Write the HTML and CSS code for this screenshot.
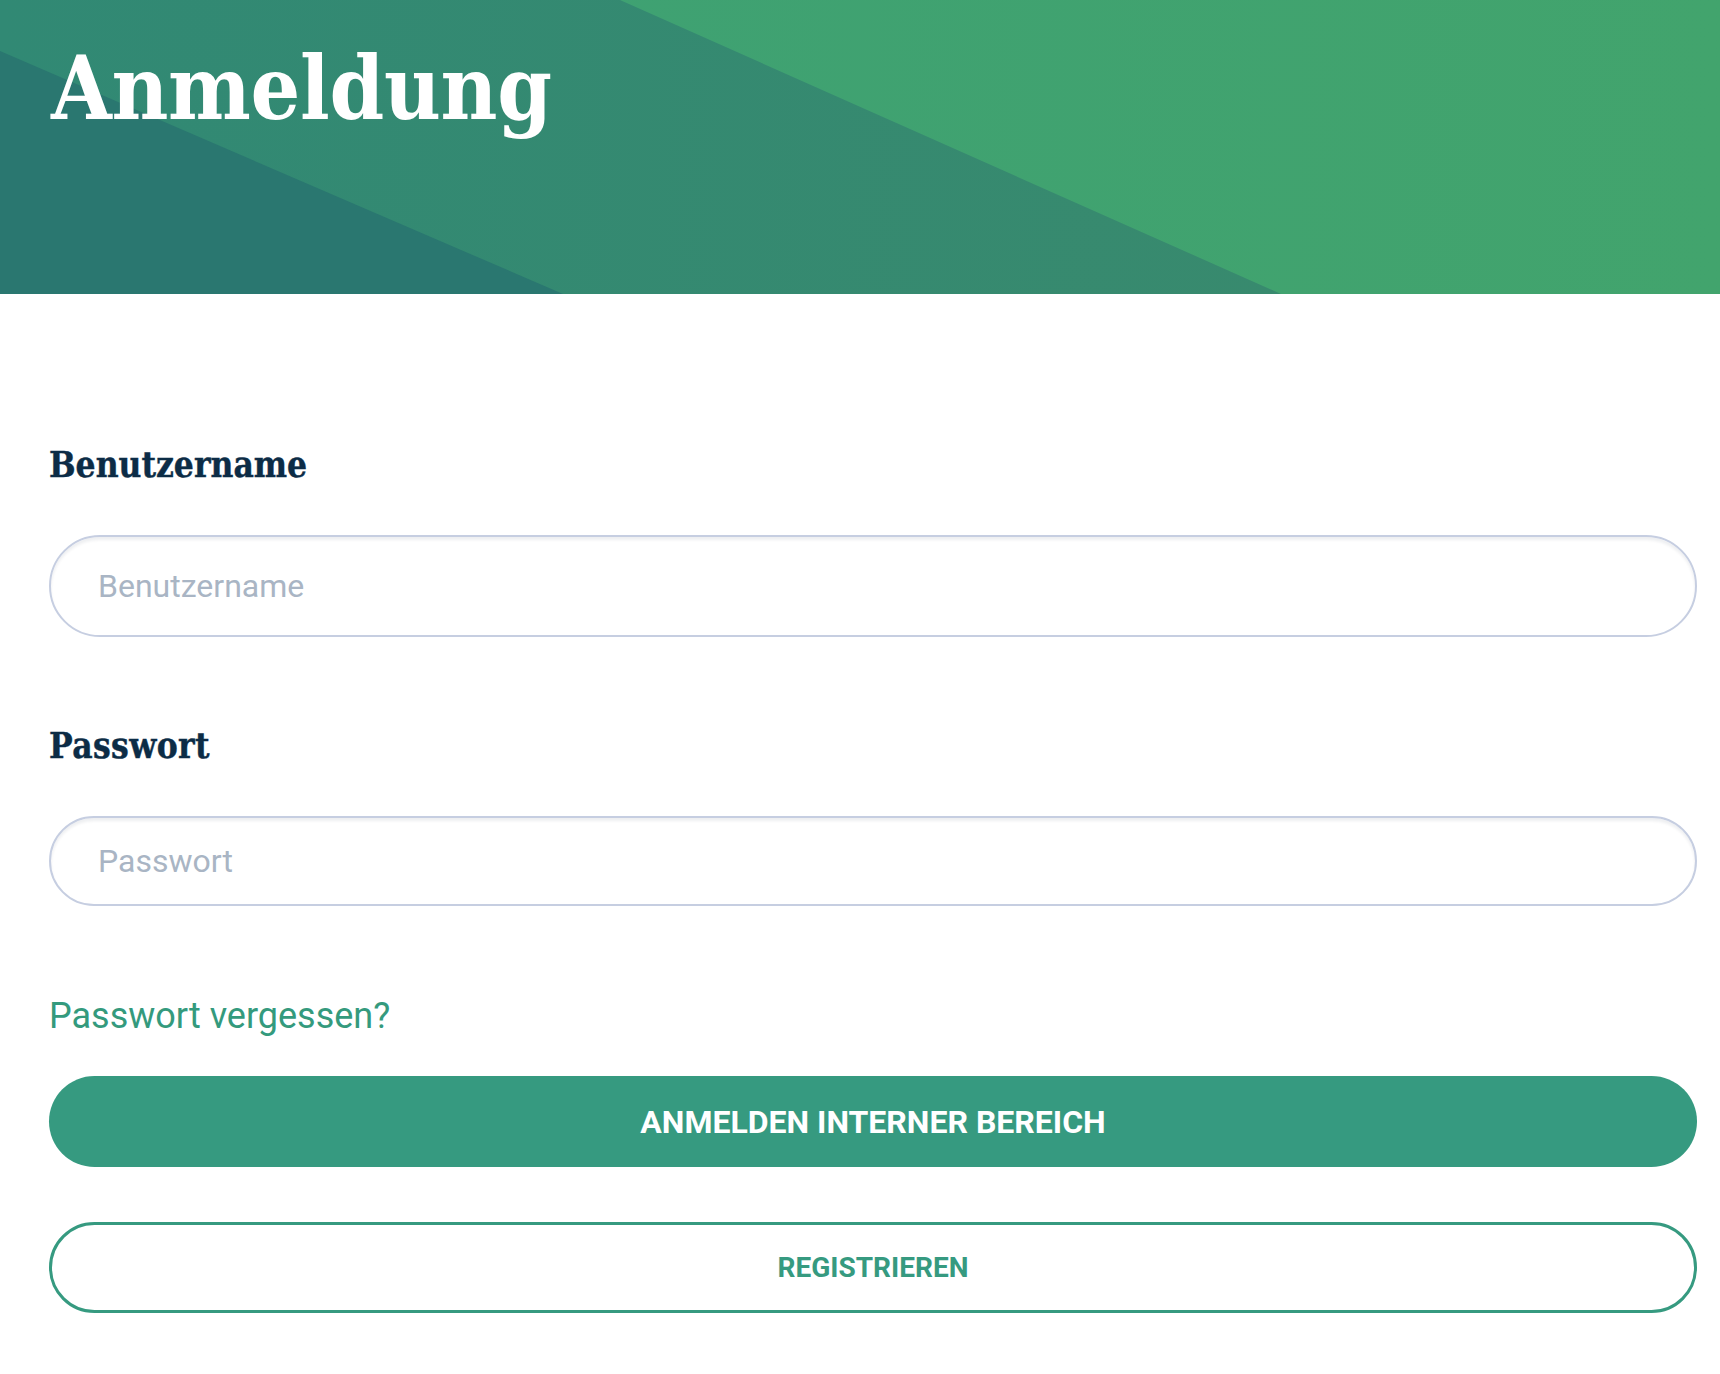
FILE: index.html
```html
<!DOCTYPE html>
<html lang="de">
<head>
<meta charset="utf-8">
<title>Anmeldung</title>
<link rel="stylesheet" href="styles.css">
</head>
<body>
<header class="hero">
  <svg class="hero-bg" viewBox="0 0 1720 294" preserveAspectRatio="none" aria-hidden="true">
    <defs>
      <linearGradient id="gLight" x1="0" y1="0" x2="1" y2="0">
        <stop offset="0" stop-color="#3da075"/>
        <stop offset="1" stop-color="#42a46d"/>
      </linearGradient>
      <linearGradient id="gMid" x1="0" y1="0" x2="1" y2="0">
        <stop offset="0" stop-color="#318974"/>
        <stop offset="1" stop-color="#388a6e"/>
      </linearGradient>
    </defs>
    <rect x="0" y="0" width="1720" height="294" fill="url(#gLight)"/>
    <polygon points="0,0 620,0 1281,294 0,294" fill="url(#gMid)"/>
    <polygon points="0,51 563,294 0,294" fill="#2a7770"/>
  </svg>
  <h1 class="hero-title">Anmeldung</h1>
</header>

<main class="login">
  <form class="login-form">
    <label class="field-label" for="user">Benutzername</label>
    <input class="field-input field-input--tall" id="user" type="text" placeholder="Benutzername">

    <label class="field-label field-label--second" for="pass">Passwort</label>
    <input class="field-input" id="pass" type="password" placeholder="Passwort">

    <a class="forgot" href="#">Passwort vergessen?</a>

    <button class="btn btn-primary" type="button">ANMELDEN INTERNER BEREICH</button>
    <button class="btn btn-outline" type="button">REGISTRIEREN</button>
  </form>
</main>
</body>
</html>
```

FILE: styles.css
```css
html, body {
  margin: 0;
  padding: 0;
  background: #ffffff;
}

body {
  font-family: Roboto, "Liberation Sans", sans-serif;
}

.hero {
  position: relative;
  height: 294px;
  overflow: hidden;
  box-sizing: border-box;
  padding: 45px 0 0 51px;
}

.hero-bg {
  position: absolute;
  inset: 0;
  width: 100%;
  height: 100%;
  display: block;
}

.hero-title {
  position: relative;
  margin: 0;
  font-family: "DejaVu Serif", serif;
  font-stretch: condensed;
  font-weight: 700;
  font-size: 87px;
  line-height: 88px;
  color: #ffffff;
  letter-spacing: -0.3px;
}

.login {
  padding: 153px 23px 60px 49px;
}

.login-form {
  display: flex;
  flex-direction: column;
  align-items: stretch;
}

.field-label {
  font-family: "DejaVu Serif", serif;
  font-stretch: condensed;
  font-weight: 700;
  font-size: 35px;
  line-height: 36px;
  color: #0c2c46;
  margin: 0 0 52px 0;
  -webkit-text-stroke: 0.4px #0c2c46;
}

.field-label--second {
  margin-top: 91px;
  letter-spacing: 0.4px;
}

.field-input {
  box-sizing: border-box;
  height: 90px;
  width: 100%;
  border: 2px solid #c6cee1;
  border-radius: 60px;
  padding: 0 0 0 47px;
  font-family: Roboto, sans-serif;
  font-size: 32px;
  color: #23364a;
  background: #ffffff;
  box-shadow: inset 0 3px 3px rgba(20, 30, 60, 0.07);
  outline: none;
}

.field-input--tall {
  height: 102px;
}

.field-input::placeholder {
  color: #a9b5c4;
  opacity: 1;
}

.forgot {
  align-self: flex-start;
  margin-top: 92px;
  font-family: Roboto, sans-serif;
  font-size: 36px;
  line-height: 36px;
  color: #349a7d;
  text-decoration: none;
}

.btn {
  box-sizing: border-box;
  height: 91px;
  width: 100%;
  border-radius: 46px;
  font-family: Roboto, sans-serif;
  font-weight: 700;
  cursor: pointer;
  display: flex;
  align-items: center;
  justify-content: center;
}

.btn-primary {
  margin-top: 42px;
  background: #369a80;
  border: none;
  color: #ffffff;
  font-size: 32px;
}

.btn-outline {
  margin-top: 55px;
  background: #ffffff;
  border: 3px solid #369a80;
  color: #369a80;
  font-size: 28px;
}
```
